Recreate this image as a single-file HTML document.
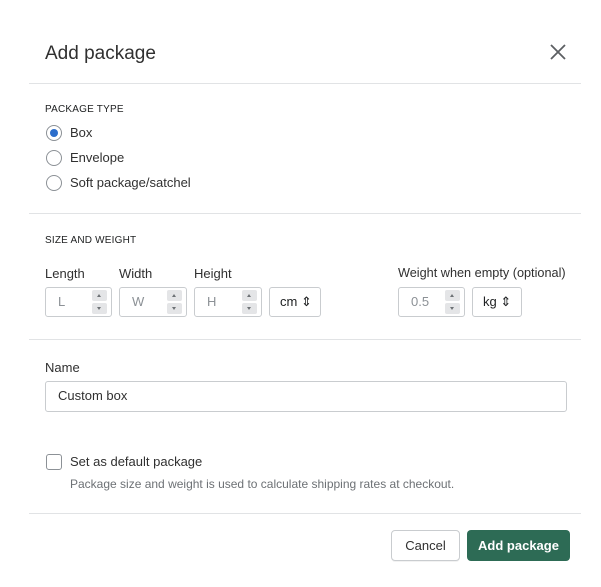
<!DOCTYPE html><html><head><style>
body{margin:0;width:601px;height:587px;background:#fff;font-family:"Liberation Sans",sans-serif;color:#202223;position:relative;overflow:hidden}
.a{position:absolute}
.hr{position:absolute;left:29px;width:552px;height:1px;background:#e1e3e5}
.t{font-size:13px;color:#303030}
.cap{font-size:10px;color:#202223;letter-spacing:.2px}
.r{position:absolute;width:14px;height:14px;border:1px solid #8c9196;border-radius:50%;left:46px}
.in{position:absolute;border:1px solid #c9cccf;border-radius:3px;height:30px;box-sizing:border-box;font-size:13px;color:#8c9196;line-height:28px;padding-left:12px}
.sp{position:absolute;right:4px;width:15px;height:11px;background:#e4e5e7;border-radius:2px}
.sp:after{content:"";position:absolute;left:5px;top:4px;border-left:2.5px solid transparent;border-right:2.5px solid transparent}
.u:after{border-bottom:3px solid #6d7175}.d:after{border-top:3px solid #6d7175}
.sel{color:#202223}
</style></head><body>
<div class="a" style="left:45px;top:43px;font-size:19px;color:#303030">Add package</div>
<svg class="a" style="left:549px;top:43px" width="18" height="18" viewBox="0 0 18 18"><path d="M2 2L16 16M16 2L2 16" stroke="#5c5f62" stroke-width="1.8"/></svg>
<div class="hr" style="top:83px"></div>
<div class="a cap" style="left:45px;top:104px">PACKAGE TYPE</div>
<div class="r" style="top:125px"><div class="a" style="left:3px;top:3px;width:8px;height:8px;border-radius:50%;background:#2c6ecb"></div></div>
<div class="a t" style="left:70px;top:125px">Box</div>
<div class="r" style="top:150px"></div><div class="a t" style="left:70px;top:150px">Envelope</div>
<div class="r" style="top:175px"></div><div class="a t" style="left:70px;top:175px">Soft package/satchel</div>
<div class="hr" style="top:213px"></div>
<div class="a cap" style="left:45px;top:235px">SIZE AND WEIGHT</div>
<div class="a t" style="left:45px;top:266px">Length</div>
<div class="a t" style="left:119px;top:266px">Width</div>
<div class="a t" style="left:194px;top:266px">Height</div>
<div class="a t" style="left:398px;top:266px;font-size:12.7px">Weight when empty (optional)</div>
<div class="in" style="left:45px;top:287px;width:67px">L<div class="sp u" style="top:2px"></div><div class="sp d" style="top:15px"></div></div>
<div class="in" style="left:119px;top:287px;width:68px">W<div class="sp u" style="top:2px"></div><div class="sp d" style="top:15px"></div></div>
<div class="in" style="left:194px;top:287px;width:68px">H<div class="sp u" style="top:2px"></div><div class="sp d" style="top:15px"></div></div>
<div class="in sel" style="left:269px;top:287px;width:52px;padding-left:10px">cm ⇕</div>
<div class="in" style="left:398px;top:287px;width:67px">0.5<div class="sp u" style="top:2px"></div><div class="sp d" style="top:15px"></div></div>
<div class="in sel" style="left:472px;top:287px;width:50px;padding-left:10px">kg ⇕</div>
<div class="hr" style="top:339px"></div>
<div class="a t" style="left:45px;top:360px">Name</div>
<div class="in sel" style="left:45px;top:381px;width:522px;height:31px;color:#303030">Custom box</div>
<div class="a" style="left:46px;top:454px;width:14px;height:14px;border:1px solid #8c9196;border-radius:3px"></div>
<div class="a t" style="left:70px;top:454px">Set as default package</div>
<div class="a" style="left:70px;top:477px;font-size:12px;color:#6d7175">Package size and weight is used to calculate shipping rates at checkout.</div>
<div class="hr" style="top:513px"></div>
<div class="a" style="left:391px;top:530px;width:69px;height:31px;box-sizing:border-box;border:1px solid #c9cccf;border-radius:4px;text-align:center;line-height:29px;font-size:13px;color:#303030;box-shadow:0 1px 0 rgba(0,0,0,.05)">Cancel</div>
<div class="a" style="left:467px;top:530px;width:103px;height:31px;background:#2d6b55;border-radius:4px;text-align:center;line-height:31px;font-size:13px;color:#fff;font-weight:bold">Add package</div>
</body></html>
